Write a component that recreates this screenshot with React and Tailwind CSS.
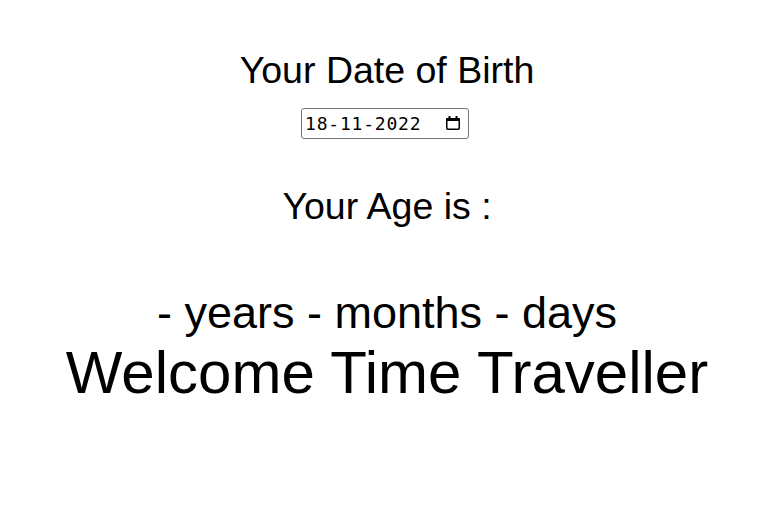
import React from 'react'

const CalendarIcon = () => (
  <svg width="16" height="16" viewBox="0 0 16 16" fill="black">
    <rect x="1.75" y="3.75" width="12.5" height="10.5" rx="1" fill="none" stroke="black" strokeWidth="1.5" />
    <rect x="1" y="3" width="14" height="3" rx="1" />
    <rect x="3.5" y="1" width="2" height="3" />
    <rect x="10.5" y="1" width="2" height="3" />
  </svg>
)

export default function App() {
  return (
    <div className="flex flex-col items-center text-black" style={{ fontFamily: '"Liberation Sans", Arial, sans-serif' }}>
      <h1 className="mt-[52px] text-[37.5px] leading-none">Your Date of Birth</h1>

      {/* date field */}
      <div className="mt-[18px] mr-[4px] w-[168px] h-[31px] flex items-center justify-between pl-[3px] pr-[7px] border border-[#767676] rounded-[3px] bg-white">
        <span className="text-[18px] tracking-[0.8px]" style={{ fontFamily: '"DejaVu Sans Mono", monospace' }}>18-11-2022</span>
        <CalendarIcon />
      </div>

      <h2 className="mt-[49px] text-[37.5px] leading-none">Your Age is :</h2>
      <p className="mt-[65px] text-[45px] leading-none">- years - months - days</p>
      <p className="mt-[8px] text-[60px] leading-none">Welcome Time Traveller</p>
    </div>
  )
}
